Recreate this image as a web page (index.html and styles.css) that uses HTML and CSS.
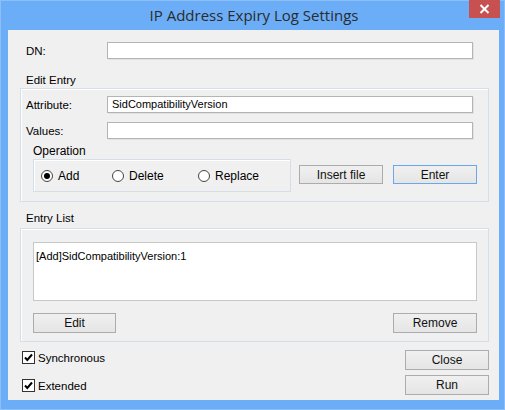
FILE: index.html
```html
<!DOCTYPE html>
<html>
<head>
<meta charset="utf-8">
<link rel="stylesheet" href="styles.css">
</head>
<body>
<div class="window">
  <div class="titlebar">
    <div class="title">IP Address Expiry Log Settings</div>
    <div class="close">
      <svg width="11" height="10" viewBox="0 0 11 10"><path d="M1.5 1 L9.5 9 M9.5 1 L1.5 9" stroke="#fff" stroke-width="2" fill="none"/></svg>
    </div>
  </div>
  <div class="client">
    <div class="row dn"><span class="label">DN:</span><div class="input"></div></div>
    <div class="sec-title">Edit Entry</div>
    <div class="group g1">
      <div class="row"><span class="label">Attribute:</span><div class="input">SidCompatibilityVersion</div></div>
      <div class="row values"><span class="label">Values:</span><div class="input"></div></div>
      <div class="op-title">Operation</div>
      <div class="op-row">
        <div class="op-box">
          <div class="radio r-add"><span class="circle on"></span><span>Add</span></div>
          <div class="radio r-del"><span class="circle"></span><span>Delete</span></div>
          <div class="radio"><span class="circle"></span><span>Replace</span></div>
        </div>
        <div class="btn insert">Insert file</div>
        <div class="btn enter">Enter</div>
      </div>
    </div>
    <div class="sec-title second">Entry List</div>
    <div class="group g2">
      <div class="listbox">[Add]SidCompatibilityVersion:1</div>
      <div class="list-buttons">
        <div class="btn">Edit</div>
        <div class="btn">Remove</div>
      </div>
    </div>
    <div class="bottom">
      <div class="checks">
        <div class="check"><svg width="13" height="13" viewBox="0 0 13 13"><rect x="0.5" y="0.5" width="12" height="12" fill="#fff" stroke="#333"/><path d="M3 6.5 L5.3 9 L10 3.5" stroke="#000" stroke-width="2" fill="none"/></svg><span>Synchronous</span></div>
        <div class="check"><svg width="13" height="13" viewBox="0 0 13 13"><rect x="0.5" y="0.5" width="12" height="12" fill="#fff" stroke="#333"/><path d="M3 6.5 L5.3 9 L10 3.5" stroke="#000" stroke-width="2" fill="none"/></svg><span>Extended</span></div>
      </div>
      <div class="actions">
        <div class="btn">Close</div>
        <div class="btn">Run</div>
      </div>
    </div>
  </div>
</div>
</body>
</html>
```
FILE: styles.css
```css
* { box-sizing: border-box; }
html, body { margin: 0; padding: 0; background: #fff; }
body { font-family: "Liberation Sans", Arial, sans-serif; font-size: 11.5px; color: #000; }

.window {
  width: 505px; height: 410px;
  background: #6badf6;
  border: 1px solid #8cbff7;
  padding: 0 5px 9px 7px;
}
.titlebar {
  height: 30px;
  display: grid;
  margin-top: -1px;
  margin-right: -1px;
}
.title, .close { grid-area: 1 / 1; }
.title {
  justify-self: center;
  font-family: "Open Sans", "Noto Sans", sans-serif;
  font-size: 15px;
  color: #2b2b2b;
  padding-top: 5px;
  line-height: 20px;
}
.close {
  justify-self: end;
  width: 31px; height: 18px;
  background: #c75050;
  display: flex; align-items: center; justify-content: center;
}
.client {
  width: 491px; height: 370px;
  background: #f0f0f0;
  padding-top: 12px;
}
.row { display: flex; align-items: center; height: 17px; }
.dn { padding-left: 18px; }
.label { width: 81px; flex: none; }
.input {
  width: 366px; height: 17px;
  background: #fff;
  border: 1px solid #b4b4b4;
  box-shadow: 1px 1px 0 #e2e2e2;
  padding: 0 0 0 4px;
  line-height: 15px;
  font-size: 11px;
}
.sec-title {
  margin-top: 14px;
  padding-left: 18px;
  height: 14px; line-height: 14px;
}
.sec-title.second { margin-top: 9px; }
.group {
  margin: 1px 10px 0 12px;
  border: 1px solid #d6dfe8;
  box-shadow: inset 1px 1px 0 #fff;
}
.g1 { padding: 7px 11px 9px 5px; }
.values { margin-top: 9px; }
.op-title { margin: 5px 0 0 7px; height: 14px; line-height: 14px; font-size: 12px; }
.op-row { display: flex; margin-left: 7px; margin-top: 1px; align-items: flex-start; }
.op-box {
  width: 258px; height: 33px;
  border: 1px solid #d6dfe8;
  box-shadow: inset 1px 1px 0 #fff;
  display: flex; align-items: center;
  padding-left: 7px;
  font-size: 12px;
}
.radio { display: flex; align-items: center; gap: 5px; }
.r-add { width: 71px; }
.r-del { width: 86px; }
.circle {
  width: 12px; height: 12px; border-radius: 50%;
  border: 1px solid #444; background: #fff;
  display: flex; align-items: center; justify-content: center;
}
.circle.on::after {
  content: ""; width: 6px; height: 6px; border-radius: 50%; background: #000;
}
.btn {
  width: 84px; height: 20px;
  border: 1px solid #acacac;
  background: linear-gradient(#f0f0f0, #e5e5e5);
  display: flex; align-items: center; justify-content: center;
  font-size: 12px;
  color: #111;
}
.insert { margin: 6px 0 0 8px; height: 19px; }
.enter { margin: 6px 0 0 10px; height: 19px; border-color: #6aa8ee; }
.g2 { margin-top: 3px; padding: 13px 11px 8px 12px; }
.listbox {
  width: 444px; height: 59px;
  background: #fff;
  border: 1px solid #c8c8c8;
  padding: 6px 0 0 2px;
  line-height: 14px;
  font-size: 11px;
}
.list-buttons { display: flex; justify-content: space-between; margin-top: 12px; }
.list-buttons .btn:first-child { width: 83px; }
.bottom { display: flex; justify-content: space-between; margin: 8px 10px 0 14px; }
.checks { display: flex; flex-direction: column; }
.check { display: flex; align-items: center; gap: 3px; height: 13px; margin-top: 1px; }
.check + .check { margin-top: 15px; }
.actions { display: flex; flex-direction: column; gap: 5px; }
```
